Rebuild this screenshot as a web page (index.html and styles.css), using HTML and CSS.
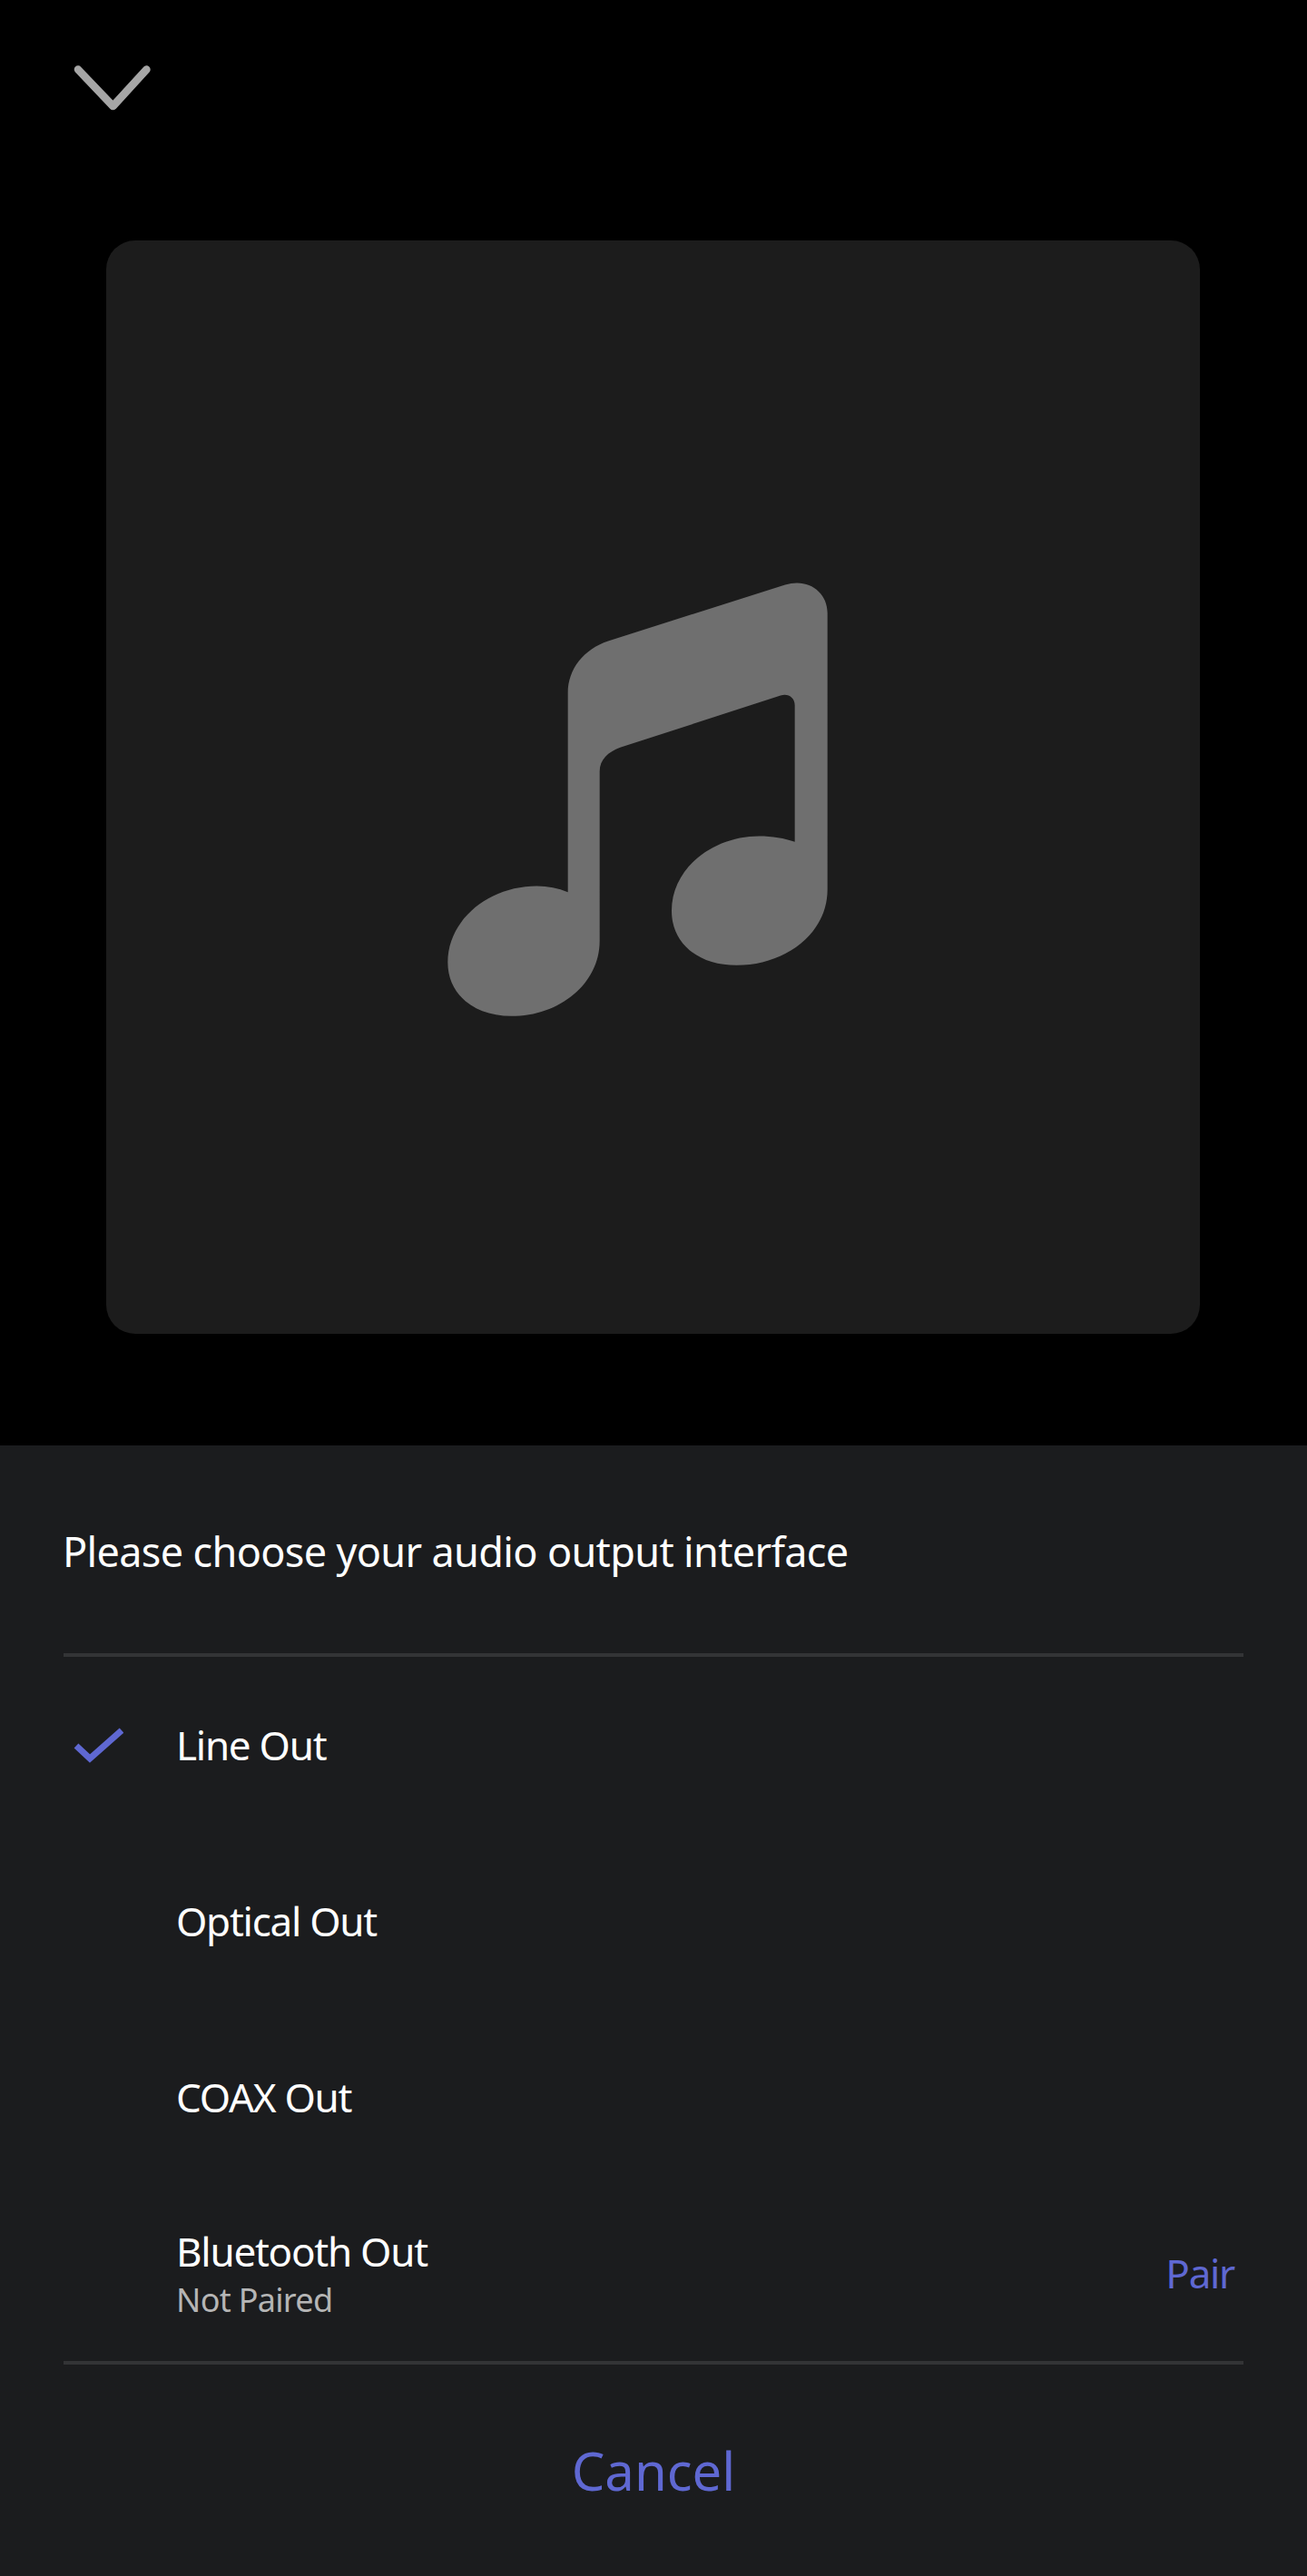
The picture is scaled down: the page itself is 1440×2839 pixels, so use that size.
FILE: index.html
```html
<!DOCTYPE html>
<html lang="en">
<head>
  <meta charset="UTF-8" />
  <title>Audio output</title>
  <link rel="stylesheet" href="styles.css">
</head>
<body>
  <div class="player">
    <div class="top-bar">
      <svg class="chevron" viewBox="0 0 90 52"><polyline points="6,4.6 44.5,45 81.4,4.6"/></svg>
    </div>
    <div class="art">
      <svg class="note" viewBox="0 -37.5 1560 1560">
        <path d="M497 1088V430C497 350 550 285 630 258L1215 72C1290 48 1355 95 1355 165V1080C1355 1225 1215 1330 1055 1330C930 1330 840 1260 840 1150C840 1010 975 903 1130 903C1170 903 1215 910 1247 922V470C1247 445 1225 430 1200 438L670 610C630 625 602 650 602 690V1250C602 1390 470 1498 310 1498C185 1498 100 1425 100 1320C100 1180 235 1068 395 1068C430 1068 465 1075 497 1088Z"/>
      </svg>
    </div>
  </div>
  <div class="sheet">
    <div class="sheet-title">Please choose your audio output interface</div>
    <div class="options">
      <div class="option">
        <svg class="check" viewBox="0 0 56 40"><polyline points="4,20 19,34 54,3"/></svg>
        <div class="option-text">Line Out</div>
      </div>
      <div class="option">
        <div class="option-text">Optical Out</div>
      </div>
      <div class="option">
        <div class="option-text">COAX Out</div>
      </div>
      <div class="option">
        <div class="option-text">
          Bluetooth Out
          <div class="option-sub">Not Paired</div>
        </div>
        <div class="pair">Pair</div>
      </div>
    </div>
    <div class="cancel">Cancel</div>
  </div>
</body>
</html>
```

FILE: styles.css
```css
body {
  margin: 0;
  background: #000;
  font-family: "Noto Sans", sans-serif;
  color: #fff;
}
.player {
  height: 1593px;
}
.top-bar {
  height: 265px;
  padding-left: 80px;
  box-sizing: border-box;
  padding-top: 72px;
}
.chevron {
  display: block;
  width: 90px;
  height: 52px;
}
.chevron polyline {
  fill: none;
  stroke: #a6a6a6;
  stroke-width: 8.6;
  stroke-linecap: round;
  stroke-linejoin: round;
}
.art {
  width: 1205px;
  height: 1205px;
  margin-left: 117px;
  background: #1c1c1c;
  border-radius: 32px;
  display: flex;
  align-items: center;
  justify-content: center;
}
.note {
  width: 520px;
  height: 520px;
}
.note path {
  fill: #6f6f6f;
}
.sheet {
  height: 1246px;
  background: #1b1c1e;
  padding: 0 70px;
}
.sheet-title {
  height: 144px;
  padding-top: 85px;
  font-size: 45px;
  line-height: 64px;
  letter-spacing: -0.65px;
  text-indent: -1px;
  border-bottom: 4px solid #333436;
}
.options {
  border-bottom: 4px solid #333436;
}
.option {
  height: 194px;
  padding-left: 124px;
  display: flex;
  align-items: center;
  justify-content: space-between;
  position: relative;
  font-size: 44px;
  line-height: 60px;
  letter-spacing: -1.25px;
}
.check {
  position: absolute;
  left: 10px;
  top: 78px;
  width: 56px;
  height: 40px;
}
.check polyline {
  fill: none;
  stroke: #5f68d2;
  stroke-width: 7;
}
.option-sub {
  font-size: 36px;
  line-height: 48px;
  letter-spacing: -0.7px;
  color: #b5b5b5;
}
.pair {
  font-size: 44px;
  letter-spacing: -1.3px;
  color: #5f68d2;
  padding-right: 10px;
}
.cancel {
  padding-top: 81px;
  text-align: center;
  font-size: 58px;
  line-height: 72px;
  color: #5f68d2;
}
```
